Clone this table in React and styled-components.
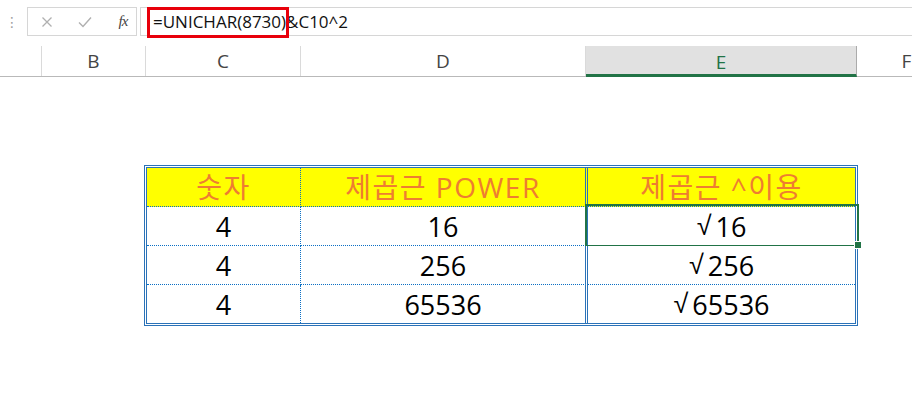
import React from "react";
import styled, { createGlobalStyle } from "styled-components";

const GlobalStyle = createGlobalStyle`
  html, body {
    margin: 0;
    padding: 0;
    background: #ffffff;
  }
  body {
    font-family: "Open Sans", "Noto Sans CJK KR", sans-serif;
    color: #000;
  }
`;

const Page = styled.div`
  width: 912px;
  height: 397px;
  overflow: hidden;
  background: #fff;
`;

// Formula bar
const FormulaBar = styled.div`
  display: flex;
  align-items: flex-start;
  height: 46px;
  padding-top: 7px;
  box-sizing: border-box;
`;

const Grip = styled.div`
  width: 27px;
  height: 29px;
  display: flex;
  align-items: center;
  justify-content: center;
  color: #a0a0a0;
  font-size: 14px;
  font-family: "DejaVu Sans", sans-serif;
  padding-right: 3px;
  box-sizing: border-box;
`;

const ButtonBox = styled.div`
  width: 110px;
  height: 29px;
  border: 1px solid #d6d6d6;
  box-sizing: border-box;
  display: flex;
  align-items: center;
  padding-left: 8px;
  gap: 16px;
`;

const BarIcon = styled.span`
  width: 22px;
  display: flex;
  justify-content: center;
`;

const Fx = styled.span`
  font-family: "Liberation Serif", serif;
  font-style: italic;
  font-size: 15px;
  color: #444;
  letter-spacing: -1px;
`;

const FormulaBox = styled.div`
  position: relative;
  flex: 1;
  margin-left: 3px;
  height: 29px;
  border-top: 1px solid #d6d6d6;
  border-bottom: 1px solid #d6d6d6;
  border-left: 1px solid #d6d6d6;
  box-sizing: border-box;
  display: flex;
  align-items: center;
  padding-left: 12px;
  font-size: 17px;
  color: #111;
`;

const Highlight = styled.div`
  position: absolute;
  left: 6px;
  top: -1px;
  width: 142px;
  height: 31px;
  border: 3px solid #e8000b;
  box-sizing: border-box;
`;

// Column headers
const HeaderRow = styled.div`
  display: flex;
  height: 30px;
  border-bottom: 1px solid #b9b9b9;
`;

const ColHead = styled.div`
  flex: 0 0 ${(p) => p.$w}px;
  display: flex;
  align-items: center;
  justify-content: center;
  box-sizing: border-box;
  border-right: 1px solid ${(p) => (p.$selected ? "#ababab" : "#dadada")};
  background: ${(p) => (p.$selected ? "#e1e1e1" : "#fff")};
  border-bottom: ${(p) => (p.$selected ? "3px solid #217346" : "none")};
  margin-bottom: ${(p) => (p.$selected ? "-1px" : "0")};
  padding-top: ${(p) => (p.$selected ? "3px" : "0")};
  font-size: 19px;
  color: ${(p) => (p.$selected ? "#217346" : "#444")};
`;

// Sheet body
const Sheet = styled.div`
  padding-top: 88px;
  padding-left: 144px;
`;

const Table = styled.div`
  display: grid;
  grid-template-columns: 154px 287px 267px;
  width: max-content;
  border: 3px double #2a72b8;
`;

const Cell = styled.div`
  position: relative;
  height: 38px;
  display: flex;
  align-items: center;
  justify-content: center;
  font-size: ${(p) => (p.$head ? "28px" : "27px")};
  letter-spacing: ${(p) => (p.$head ? "1.5px" : "0")};
  line-height: 1;
  border-bottom: ${(p) => (p.$last ? "none" : "1px dotted #0a6fc4")};
  border-right: ${(p) =>
    p.$col === 1 ? "3px double #2a72b8" : p.$col === 0 ? "1px dotted #0a6fc4" : "none"};
  background: ${(p) => (p.$head ? "#ffff00" : "#fff")};
  color: ${(p) => (p.$head ? "#ee7d31" : "#000")};
`;

const Radical = styled.span`
  font-family: "Liberation Sans", sans-serif;
  margin-right: 4px;
`;

const Selection = styled.div`
  position: absolute;
  left: -3px;
  top: -3px;
  right: -4px;
  bottom: -2px;
  border: 2px solid #217346;
  pointer-events: none;
`;

const FillHandle = styled.div`
  position: absolute;
  right: -5px;
  bottom: -4px;
  width: 6px;
  height: 6px;
  background: #217346;
  border: 1px solid #fff;
`;

const columns = [
  { label: "", w: 42 },
  { label: "B", w: 104 },
  { label: "C", w: 155 },
  { label: "D", w: 285 },
  { label: "E", w: 271, selected: true },
  { label: "F", w: 100 },
];

const headers = ["숫자", "제곱근 POWER", "제곱근 ^이용"];
const rows = [
  ["4", "16", "16"],
  ["4", "256", "256"],
  ["4", "65536", "65536"],
];

const App = () => {
  return (
    <Page>
      <GlobalStyle />
      <FormulaBar>
        <Grip>⋮</Grip>
        <ButtonBox>
          <BarIcon>
            <svg width="12" height="12" viewBox="0 0 12 12">
              <path d="M1.5 1.5 L10.5 10.5 M10.5 1.5 L1.5 10.5" stroke="#b0b0b0" strokeWidth="1.3" />
            </svg>
          </BarIcon>
          <BarIcon>
            <svg width="14" height="12" viewBox="0 0 14 12">
              <path d="M1 6.5 L5 10.5 L13 1.5" stroke="#b0b0b0" strokeWidth="1.4" fill="none" />
            </svg>
          </BarIcon>
          <BarIcon>
            <Fx>fx</Fx>
          </BarIcon>
        </ButtonBox>
        <FormulaBox>
          =UNICHAR(8730)&amp;C10^2
          <Highlight />
        </FormulaBox>
      </FormulaBar>

      <HeaderRow>
        {columns.map((c, i) => (
          <ColHead key={i} $w={c.w} $selected={c.selected}>
            {c.label}
          </ColHead>
        ))}
      </HeaderRow>

      <Sheet>
        <Table>
          {headers.map((h, i) => (
            <Cell key={h} $head $col={i}>
              {h}
            </Cell>
          ))}
          {rows.map((r, ri) =>
            r.map((v, ci) => (
              <Cell key={`${ri}-${ci}`} $col={ci} $last={ri === rows.length - 1}>
                {ci === 2 && <Radical>√</Radical>}
                {v}
                {ri === 0 && ci === 2 && (
                  <Selection>
                    <FillHandle />
                  </Selection>
                )}
              </Cell>
            ))
          )}
        </Table>
      </Sheet>
    </Page>
  );
};

export default App;
